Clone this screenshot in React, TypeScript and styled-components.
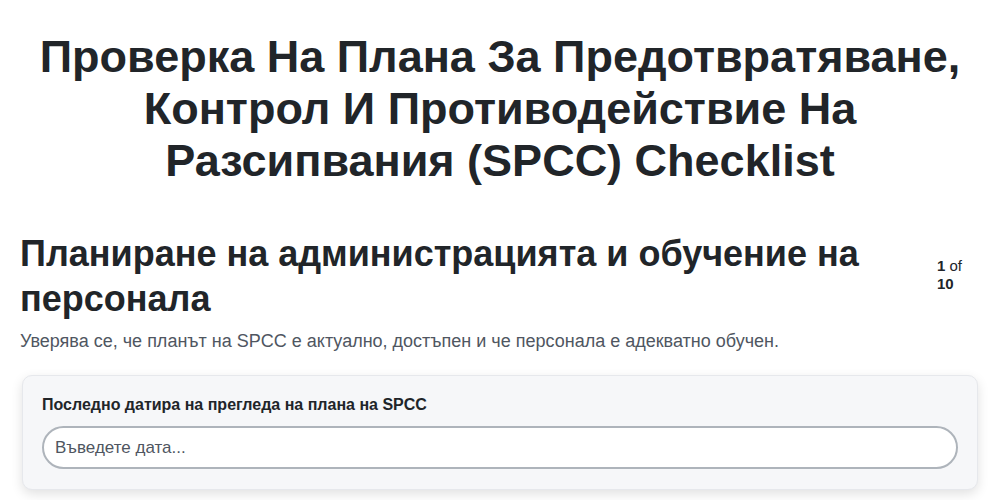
import * as React from 'react';
import styled, { createGlobalStyle } from 'styled-components';

const GlobalStyle = createGlobalStyle`
  * {
    box-sizing: border-box;
  }
  body {
    margin: 0;
    background: #fff;
    color: #212529;
    font-family: "Liberation Sans", Arial, sans-serif;
  }
`;

const Page = styled.div`
  padding: 31px 20px 20px;
`;

const Title = styled.h1`
  margin: 0 0 44px;
  text-align: center;
  font-size: 45px;
  font-weight: 700;
  line-height: 52px;
  color: #212529;
`;

const SectionHead = styled.div`
  display: flex;
  align-items: flex-start;
  gap: 20px;
`;

const SectionTitle = styled.h2`
  flex: 1;
  margin: 0;
  font-size: 36px;
  font-weight: 700;
  line-height: 45px;
  color: #212529;
`;

const Counter = styled.div`
  width: 43px;
  padding-top: 26px;
  font-size: 15px;
  line-height: 18px;
  color: #212529;

  b {
    font-weight: 700;
  }
`;

const Description = styled.p`
  margin: 8px 0 22px;
  font-size: 18px;
  line-height: 24px;
  color: #4f5661;
`;

const Card = styled.div`
  margin: 0 2px;
  padding: 19px 19px 20px;
  background: #f6f7f9;
  border: 1px solid #e6e8ec;
  border-radius: 10px;
  box-shadow: 0 4px 12px rgba(0, 0, 0, 0.12);
`;

const Label = styled.label`
  display: block;
  margin-bottom: 11px;
  font-size: 16px;
  font-weight: 700;
  line-height: 20px;
  color: #212529;
`;

const DateInput = styled.input`
  display: block;
  width: 100%;
  height: 43px;
  padding: 0 11px;
  border: 2px solid #aeb4bb;
  border-radius: 22px;
  background: #fff;
  font-family: "Liberation Sans", Arial, sans-serif;
  font-size: 17px;
  color: #212529;
  outline: none;

  &::placeholder {
    color: #4f5661;
  }
`;

export default function App() {
  return (
    <>
      <GlobalStyle />
      <Page>
        <Title>
          Проверка На Плана За Предотвратяване, Контрол И Противодействие На
          Разсипвания (SPCC) Checklist
        </Title>
        <SectionHead>
          <SectionTitle>Планиране на администрацията и обучение на персонала</SectionTitle>
          <Counter>
            <b>1</b> of <b>10</b>
          </Counter>
        </SectionHead>
        <Description>
          Уверява се, че планът на SPCC е актуално, достъпен и че персонала е адекватно обучен.
        </Description>
        <Card>
          <Label htmlFor="review-date">Последно датира на прегледа на плана на SPCC</Label>
          <DateInput id="review-date" type="text" placeholder="Въведете дата..." />
        </Card>
      </Page>
    </>
  );
}
